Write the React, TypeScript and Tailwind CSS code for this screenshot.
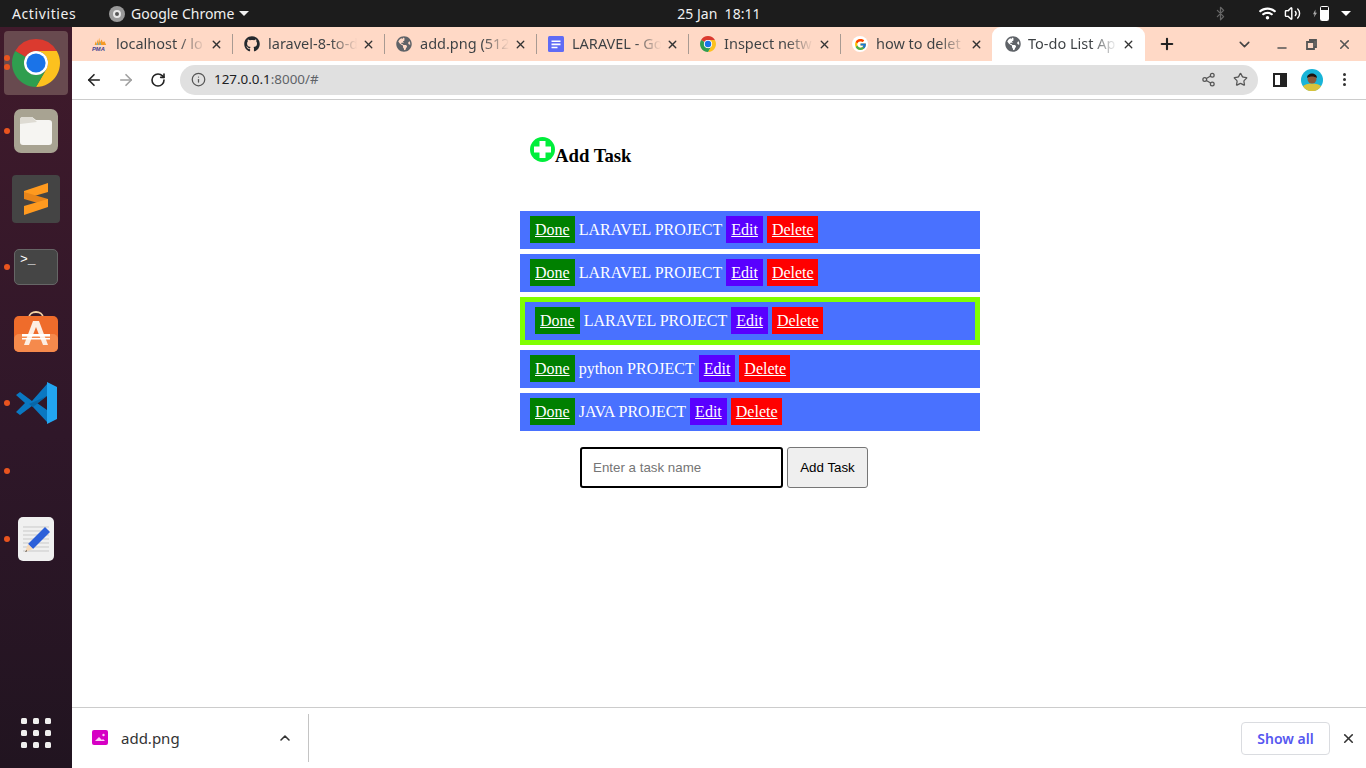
import { ArrowLeft, ArrowRight, Bluetooth, ChevronDown, ChevronUp, Info, Minus, Plus, RotateCw, Share2, Star, Volume2, X } from 'lucide-react';
import { FaGithub, FaGlobeAmericas, FaWifi } from 'react-icons/fa';
import { FcGoogle } from 'react-icons/fc';

const tasks = [
  { name: 'LARAVEL PROJECT', active: false },
  { name: 'LARAVEL PROJECT', active: false },
  { name: 'LARAVEL PROJECT', active: true },
  { name: 'python PROJECT', active: false },
  { name: 'JAVA PROJECT', active: false },
];

function ChromeLogo({ className }: { className: string }) {
  return (
    <svg viewBox="4 4 40 40" className={className}>
      <path d="M24 4A20 20 0 0 1 41.32 14H24a10 10 0 0 0-8.66 5L6.68 14A20 20 0 0 1 24 4z" fill="#db3a2f" />
      <path d="M41.32 14A20 20 0 0 1 24 44l8.66-15A10 10 0 0 0 24 14z" fill="#fcc11e" />
      <path d="M24 44A20 20 0 0 1 6.68 14l8.66 5A10 10 0 0 0 32.66 29z" fill="#2f9e4f" />
      <circle cx="24" cy="24" r="10" fill="#fff" />
      <circle cx="24" cy="24" r="8" fill="#1a73e8" />
    </svg>
  );
}

function PmaIcon() {
  return (
    <svg viewBox="0 0 18 16" className="w-[17px] h-[16px]">
      <path d="M3 9l1-4 1 3 1-5 1 4 1-6 1 5 2-3 1 3 2-1 2 4z" fill="#f59a23" />
      <path d="M5 9l1-3 1 3zM8 9l1-4 1 4z" fill="#58b7d8" />
      <text x="0" y="15.5" fontSize="6.5" fontWeight="700" fontStyle="italic" fill="#3b3f8f" fontFamily="Liberation Sans, sans-serif">PMA</text>
    </svg>
  );
}

function DocsIcon() {
  return (
    <svg viewBox="0 0 16 16" className="w-4 h-4">
      <rect width="16" height="16" rx="1.5" fill="#5f6bf5" />
      <path d="M3.5 4.5h9v1.6h-9zM3.5 7.6h9v1.6h-9zM3.5 10.7h6v1.6h-6z" fill="#fff" />
    </svg>
  );
}

const tabs = [
  { title: 'localhost / lo', icon: <PmaIcon /> },
  { title: 'laravel-8-to-d', icon: <FaGithub className="w-4 h-4 text-[#24292e]" /> },
  { title: 'add.png (512', icon: <FaGlobeAmericas className="w-4 h-4 text-[#5f6368]" /> },
  { title: 'LARAVEL - Go', icon: <DocsIcon /> },
  { title: 'Inspect netw', icon: <ChromeLogo className="w-4 h-4" /> },
  { title: 'how to delet', icon: <span className="w-4 h-4 rounded-full bg-white flex items-center justify-center"><FcGoogle className="w-[13px] h-[13px]" /></span> },
];

function Dot({ top }: { top: string }) {
  return <span className={`absolute left-[4px] w-[6px] h-[6px] rounded-full bg-[#e9541f] ${top}`} />;
}

function Dock() {
  return (
    <aside className="w-[72px] shrink-0 flex flex-col pt-[2px] bg-[linear-gradient(180deg,#401a2b_0%,#2f1729_55%,#211420_100%)]">
      {/* chrome */}
      <div className="relative h-[68px] flex items-center justify-center">
        <div className="w-16 h-16 rounded-[4px] bg-[#684a4f] flex items-center justify-center">
          <ChromeLogo className="w-12 h-12" />
        </div>
        <Dot top="top-[26px]" />
        <Dot top="top-[35px]" />
      </div>
      {/* files */}
      <div className="relative h-[68px] flex items-center justify-center">
        <div className="w-[44px] h-[44px] rounded-[7px] bg-[#a8a392] flex items-center justify-center">
          <svg viewBox="0 0 32 28" className="w-8 h-7">
            <path d="M0 3a3 3 0 0 1 3-3h9l4 3h13a3 3 0 0 1 3 3v19a3 3 0 0 1-3 3H3a3 3 0 0 1-3-3z" fill="#f6f5f2" />
            <path d="M0 3a3 3 0 0 1 3-3h9l5 5-17 2z" fill="#dedbd3" />
          </svg>
        </div>
        <Dot top="top-[31px]" />
      </div>
      {/* sublime */}
      <div className="relative h-[68px] flex items-center justify-center">
        <div className="w-12 h-12 rounded-[4px] bg-[#444444] flex items-center justify-center">
          <svg viewBox="0 0 24 32" className="w-6 h-8">
            <path d="M24 0v9L0 16V8z" fill="#ff9a1f" />
            <path d="M0 16l24 7v-7L0 9z" fill="#e8851a" />
            <path d="M24 16v8L0 32v-9z" fill="#ff9a1f" />
          </svg>
        </div>
      </div>
      {/* terminal */}
      <div className="relative h-[68px] flex items-center justify-center">
        <div className="w-[44px] h-[36px] rounded-[5px] bg-[#454545] border border-[#666666] flex items-start pl-[5px] pt-[2px]">
          <span className="text-white text-[13px] leading-[15px] font-['Liberation_Mono',monospace]">&gt;_</span>
        </div>
        <Dot top="top-[31px]" />
      </div>
      {/* ubuntu software */}
      <div className="relative h-[68px] flex items-center justify-center">
        <svg viewBox="0 0 44 44" className="w-[44px] h-[44px] mb-[6px]">
          <path d="M15 8c0-8 14-8 14 0" fill="none" stroke="#f3d3a6" strokeWidth="1.8" />
          <rect y="6" width="44" height="36" rx="5" fill="#ef6c2b" />
          <rect y="24" width="44" height="18" rx="5" fill="#f58a4c" />
          <path d="M19 11h6l9 24h-5l-7-18-7 18h-5z" fill="#fdeee2" />
          <path d="M8 24h28v2.500H8zM8 28h28v1.500H8z" fill="#fff" />
        </svg>
      </div>
      {/* vscode */}
      <div className="relative h-[68px] flex items-center justify-center">
        <svg viewBox="0 0 42 42" className="w-[42px] h-[42px]">
          <path d="M1 13l4-3 12 9 15-17v12L22 21l10 7v12L17 24 5 33l-4-3 9-9z" fill="#0a78c2" />
          <path d="M32 0l10 5v32l-10 5z" fill="#22a5f1" />
          <path d="M32 14L18 25l-4-3z" fill="#0867a8" />
        </svg>
        <Dot top="top-[31px]" />
      </div>
      {/* hidden app */}
      <div className="relative h-[68px]">
        <Dot top="top-[31px]" />
      </div>
      {/* text editor */}
      <div className="relative h-[68px] flex items-center justify-center">
        <svg viewBox="0 0 36 44" className="w-9 h-[44px]">
          <rect width="36" height="44" rx="5" fill="#f0f0f0" />
          <path d="M5 10h26M5 14h26M5 18h26M5 22h26M5 26h26M5 30h26M5 34h26" stroke="#c9c9c9" strokeWidth="1" />
          <path d="M27 10l5 5-17 17-5-5z" fill="#2b5fd9" />
          <path d="M10 27l5 5-8 3z" fill="#f6d9b8" />
          <path d="M8.5 33l-1.500 2 2-.7z" fill="#333" />
        </svg>
        <Dot top="top-[31px]" />
      </div>
      {/* app grid */}
      <div className="mt-auto mb-[20px] mx-auto grid grid-cols-3 gap-[6px]">
        {Array.from({ length: 9 }).map((_, i) => (
          <span key={i} className="w-[6px] h-[6px] rounded-[1.500px] bg-[#f0efee]" />
        ))}
      </div>
    </aside>
  );
}

function TabStrip() {
  return (
    <div className="h-[34px] bg-[#ffd9c6] flex items-stretch pl-2 text-[14.500px] text-[#3c4043] font-['Noto_Sans',sans-serif]">
      {tabs.map((tab, i) => (
        <div key={i} className="w-[152px] shrink-0 flex items-center pl-[12px]">
          <span className="w-4 h-4 shrink-0 flex items-center justify-center">{tab.icon}</span>
          <span className="ml-2 w-[92px] shrink-0 whitespace-nowrap text-transparent bg-clip-text bg-[linear-gradient(90deg,#3c4043_68%,transparent_97%)]">{tab.title}</span>
          <X className="ml-[2px] w-[13px] h-[13px] shrink-0 text-[#333]" strokeWidth={2.5} />
          {i < 5 && <span className="ml-[9px] -mr-px w-px h-[20px] shrink-0 bg-[#a89a92]" />}
        </div>
      ))}
      <div className="w-[153px] shrink-0 flex items-center pl-[13px] bg-white rounded-t-[9px]">
        <FaGlobeAmericas className="w-4 h-4 shrink-0 text-[#5f6368]" />
        <span className="ml-[7px] w-[92px] shrink-0 whitespace-nowrap text-transparent bg-clip-text bg-[linear-gradient(90deg,#3c4043_68%,transparent_97%)]">To-do List Ap</span>
        <X className="ml-[2px] w-[13px] h-[13px] shrink-0 text-[#333]" strokeWidth={2.5} />
      </div>
      <div className="flex items-center ml-[13px]">
        <Plus className="w-[18px] h-[18px] text-[#222]" strokeWidth={2.8} />
      </div>
      <div className="flex items-center ml-[60px]">
        <ChevronDown className="w-[17px] h-[17px] text-[#444]" strokeWidth={2.2} />
      </div>
      <div className="flex items-center ml-[22px]">
        <Minus className="w-[14px] h-[14px] mt-[7px] text-[#555]" strokeWidth={2.2} />
      </div>
      <div className="flex items-center ml-[17px]">
        <svg viewBox="0 0 11 11" className="w-[11px] h-[11px]">
          <path d="M3 1h7v7H8M1 3h7v7H1z" fill="none" stroke="#555" strokeWidth="1.8" />
        </svg>
      </div>
      <div className="flex items-center ml-[20px]">
        <X className="w-[15px] h-[15px] text-[#555]" strokeWidth={2.5} />
      </div>
    </div>
  );
}

function Toolbar() {
  return (
    <div className="h-[39px] bg-white border-b border-[#cccccc] flex items-center pb-px">
      <ArrowLeft className="ml-[13px] w-[18px] h-[18px] text-[#222]" strokeWidth={2.2} />
      <ArrowRight className="ml-[14px] w-[18px] h-[18px] text-[#a0a0a0]" strokeWidth={2.2} />
      <RotateCw className="ml-[15px] w-[16px] h-[16px] text-[#222]" strokeWidth={2.4} />
      <div className="ml-[14px] w-[1078px] h-[30px] rounded-full bg-[#e0e0e0] flex items-center pl-[11px] pr-[10px]">
        <Info className="w-[15px] h-[15px] text-[#555]" strokeWidth={2} />
        <span className="ml-[8px] text-[13.400px] text-[#202124] font-['Noto_Sans',sans-serif]">
          127.0.0.1<span className="text-[#5f6368]">:8000/#</span>
        </span>
        <Share2 className="ml-auto w-[15px] h-[15px] text-[#555]" strokeWidth={2} />
        <Star className="ml-[17px] w-[15px] h-[15px] text-[#555]" strokeWidth={2} />
      </div>
      <span className="ml-[15px] w-[14px] h-[14px] border-2 border-[#222] border-r-[7px]" />
      <svg viewBox="0 0 22 22" className="ml-[14px] w-[22px] h-[22px]">
        <circle cx="11" cy="11" r="11" fill="#18b4d8" />
        <path d="M2 17.500c2-4 16-4 18 0a11 11 0 0 1-18 0z" fill="#d9c33a" />
        <circle cx="11" cy="10" r="4.500" fill="#8a5a3a" />
        <path d="M6 9c0-6 10-6 10 0-3-2-7-2-10 0z" fill="#1c1410" />
      </svg>
      <span className="ml-[20px] flex flex-col gap-[2px]">
        <span className="w-[3px] h-[3px] rounded-full bg-[#333]" />
        <span className="w-[3px] h-[3px] rounded-full bg-[#333]" />
        <span className="w-[3px] h-[3px] rounded-full bg-[#333]" />
      </span>
    </div>
  );
}

function TaskRow({ name, active }: { name: string; active: boolean }) {
  return (
    <div className={`w-[460px] flex items-start gap-1 bg-[#4971ff] text-white px-[10px] pt-[5px] ${active ? 'h-[48px] border-[5px] border-[#80ff00]' : 'h-[38px]'}`}>
      <a href="#" className="h-[27px] px-[5px] leading-[27px] bg-[#008000] underline">Done</a>
      <span className="leading-[27px] whitespace-nowrap">{name}</span>
      <a href="#" className="h-[27px] px-[5px] leading-[27px] bg-[#5900ff] underline">Edit</a>
      <a href="#" className="w-[51px] h-[27px] pl-[5px] leading-[27px] bg-[#ff0000] underline">Delete</a>
    </div>
  );
}

function TodoPage() {
  return (
    <main className="flex-1 bg-white pl-[448px] font-['Liberation_Serif',serif] text-base text-black">
      <h3 className="h-[111px] pt-[37px] pl-[10px] text-[18.720px] font-bold leading-[25px]">
        <svg viewBox="0 0 25 25" className="inline align-baseline w-[25px] h-[25px]">
          <circle cx="12.500" cy="12.500" r="12.500" fill="#00ee3b" />
          <path d="M9.500 4h6v5.500H21v6h-5.500V21h-6v-5.500H4v-6h5.500z" fill="#fff" />
        </svg>
        Add Task
      </h3>
      <div className="flex flex-col gap-[5px]">
        {tasks.map((task, i) => (
          <TaskRow key={i} name={task.name} active={task.active} />
        ))}
      </div>
      <form className="mt-4 ml-[60px] flex gap-1 font-['Liberation_Sans',sans-serif] text-[13.333px]">
        <input
          placeholder="Enter a task name"
          className="w-[203px] h-[41px] px-[11px] border-2 border-black rounded-[3px] outline-none placeholder:text-[#757575]"
        />
        <button type="button" className="w-[81px] h-[41px] bg-[#efefef] border border-[#767676] rounded-[3px]">Add Task</button>
      </form>
    </main>
  );
}

function DownloadBar() {
  return (
    <div className="h-[61px] bg-white border-t border-[#cccccc] flex items-center font-['Noto_Sans',sans-serif]">
      <svg viewBox="0 0 16 16" className="ml-[20px] w-4 h-4 shrink-0">
        <rect width="16" height="15" rx="2" fill="#d600c4" />
        <path d="M3 11l4-4 3 3 1-1 2 2z" fill="#fbd0f5" />
        <circle cx="11.500" cy="5" r="1.200" fill="#fbd0f5" />
      </svg>
      <span className="ml-[13px] w-[59px] text-[15px] text-[#333]">add.png</span>
      <ChevronUp className="ml-[97px] w-[16px] h-[16px] text-[#333]" strokeWidth={2.4} />
      <span className="ml-[15px] w-px h-[48px] bg-[#c4c4c4]" />
      <button className="ml-auto w-[89px] h-[33px] border border-[#dadce0] rounded-[4px] text-[14px] font-semibold text-[#5657f0]">Show all</button>
      <X className="ml-[11px] mr-[10px] w-[15px] h-[15px] text-[#333]" strokeWidth={2.6} />
    </div>
  );
}

export default function App() {
  return (
    <div className="w-[1366px] h-[768px] overflow-hidden flex flex-col">
      <header className="h-[27px] shrink-0 bg-[#1c1c1c] text-[#f0f0f0] text-[14px] flex items-center font-['Noto_Sans',sans-serif]">
        <span className="ml-3 w-[97px] tracking-[0.6px]">Activities</span>
        <span className="w-4 h-4 rounded-full bg-[#9a9a9a] flex items-center justify-center">
          <span className="w-[8px] h-[8px] rounded-full border-2 border-[#e8e8e8] bg-[#555]" />
        </span>
        <span className="ml-[6px] whitespace-nowrap">Google Chrome</span>
        <span className="ml-[5px] w-0 h-0 border-x-[5px] border-x-transparent border-t-[5px] border-t-[#f0f0f0]" />
        <span className="ml-[428px] whitespace-nowrap">25 Jan&nbsp; 18:11</span>
        <Bluetooth className="ml-[453px] w-[15px] h-[15px] text-[#666]" strokeWidth={2} />
        <FaWifi className="ml-[31px] w-[17px] h-[15px] text-white" />
        <Volume2 className="ml-[8px] w-[17px] h-[17px] text-white" strokeWidth={2} />
        <svg viewBox="0 0 5 10" className="ml-[12px] w-[4px] h-[9px]">
          <path d="M3 0L0 6h2l-1 4 4-6H3z" fill="#aaa" />
        </svg>
        <span className="ml-[3px] w-[9px] h-[15px] border border-white rounded-[1.500px] bg-[linear-gradient(0deg,#fff_80%,transparent_80%)]" />
        <span className="ml-[12px] w-0 h-0 border-x-[5px] border-x-transparent border-t-[5px] border-t-white" />
      </header>
      <div className="flex-1 min-h-0 flex">
        <Dock />
        <div className="flex-1 min-w-0 flex flex-col">
          <TabStrip />
          <Toolbar />
          <TodoPage />
          <DownloadBar />
        </div>
      </div>
    </div>
  );
}
